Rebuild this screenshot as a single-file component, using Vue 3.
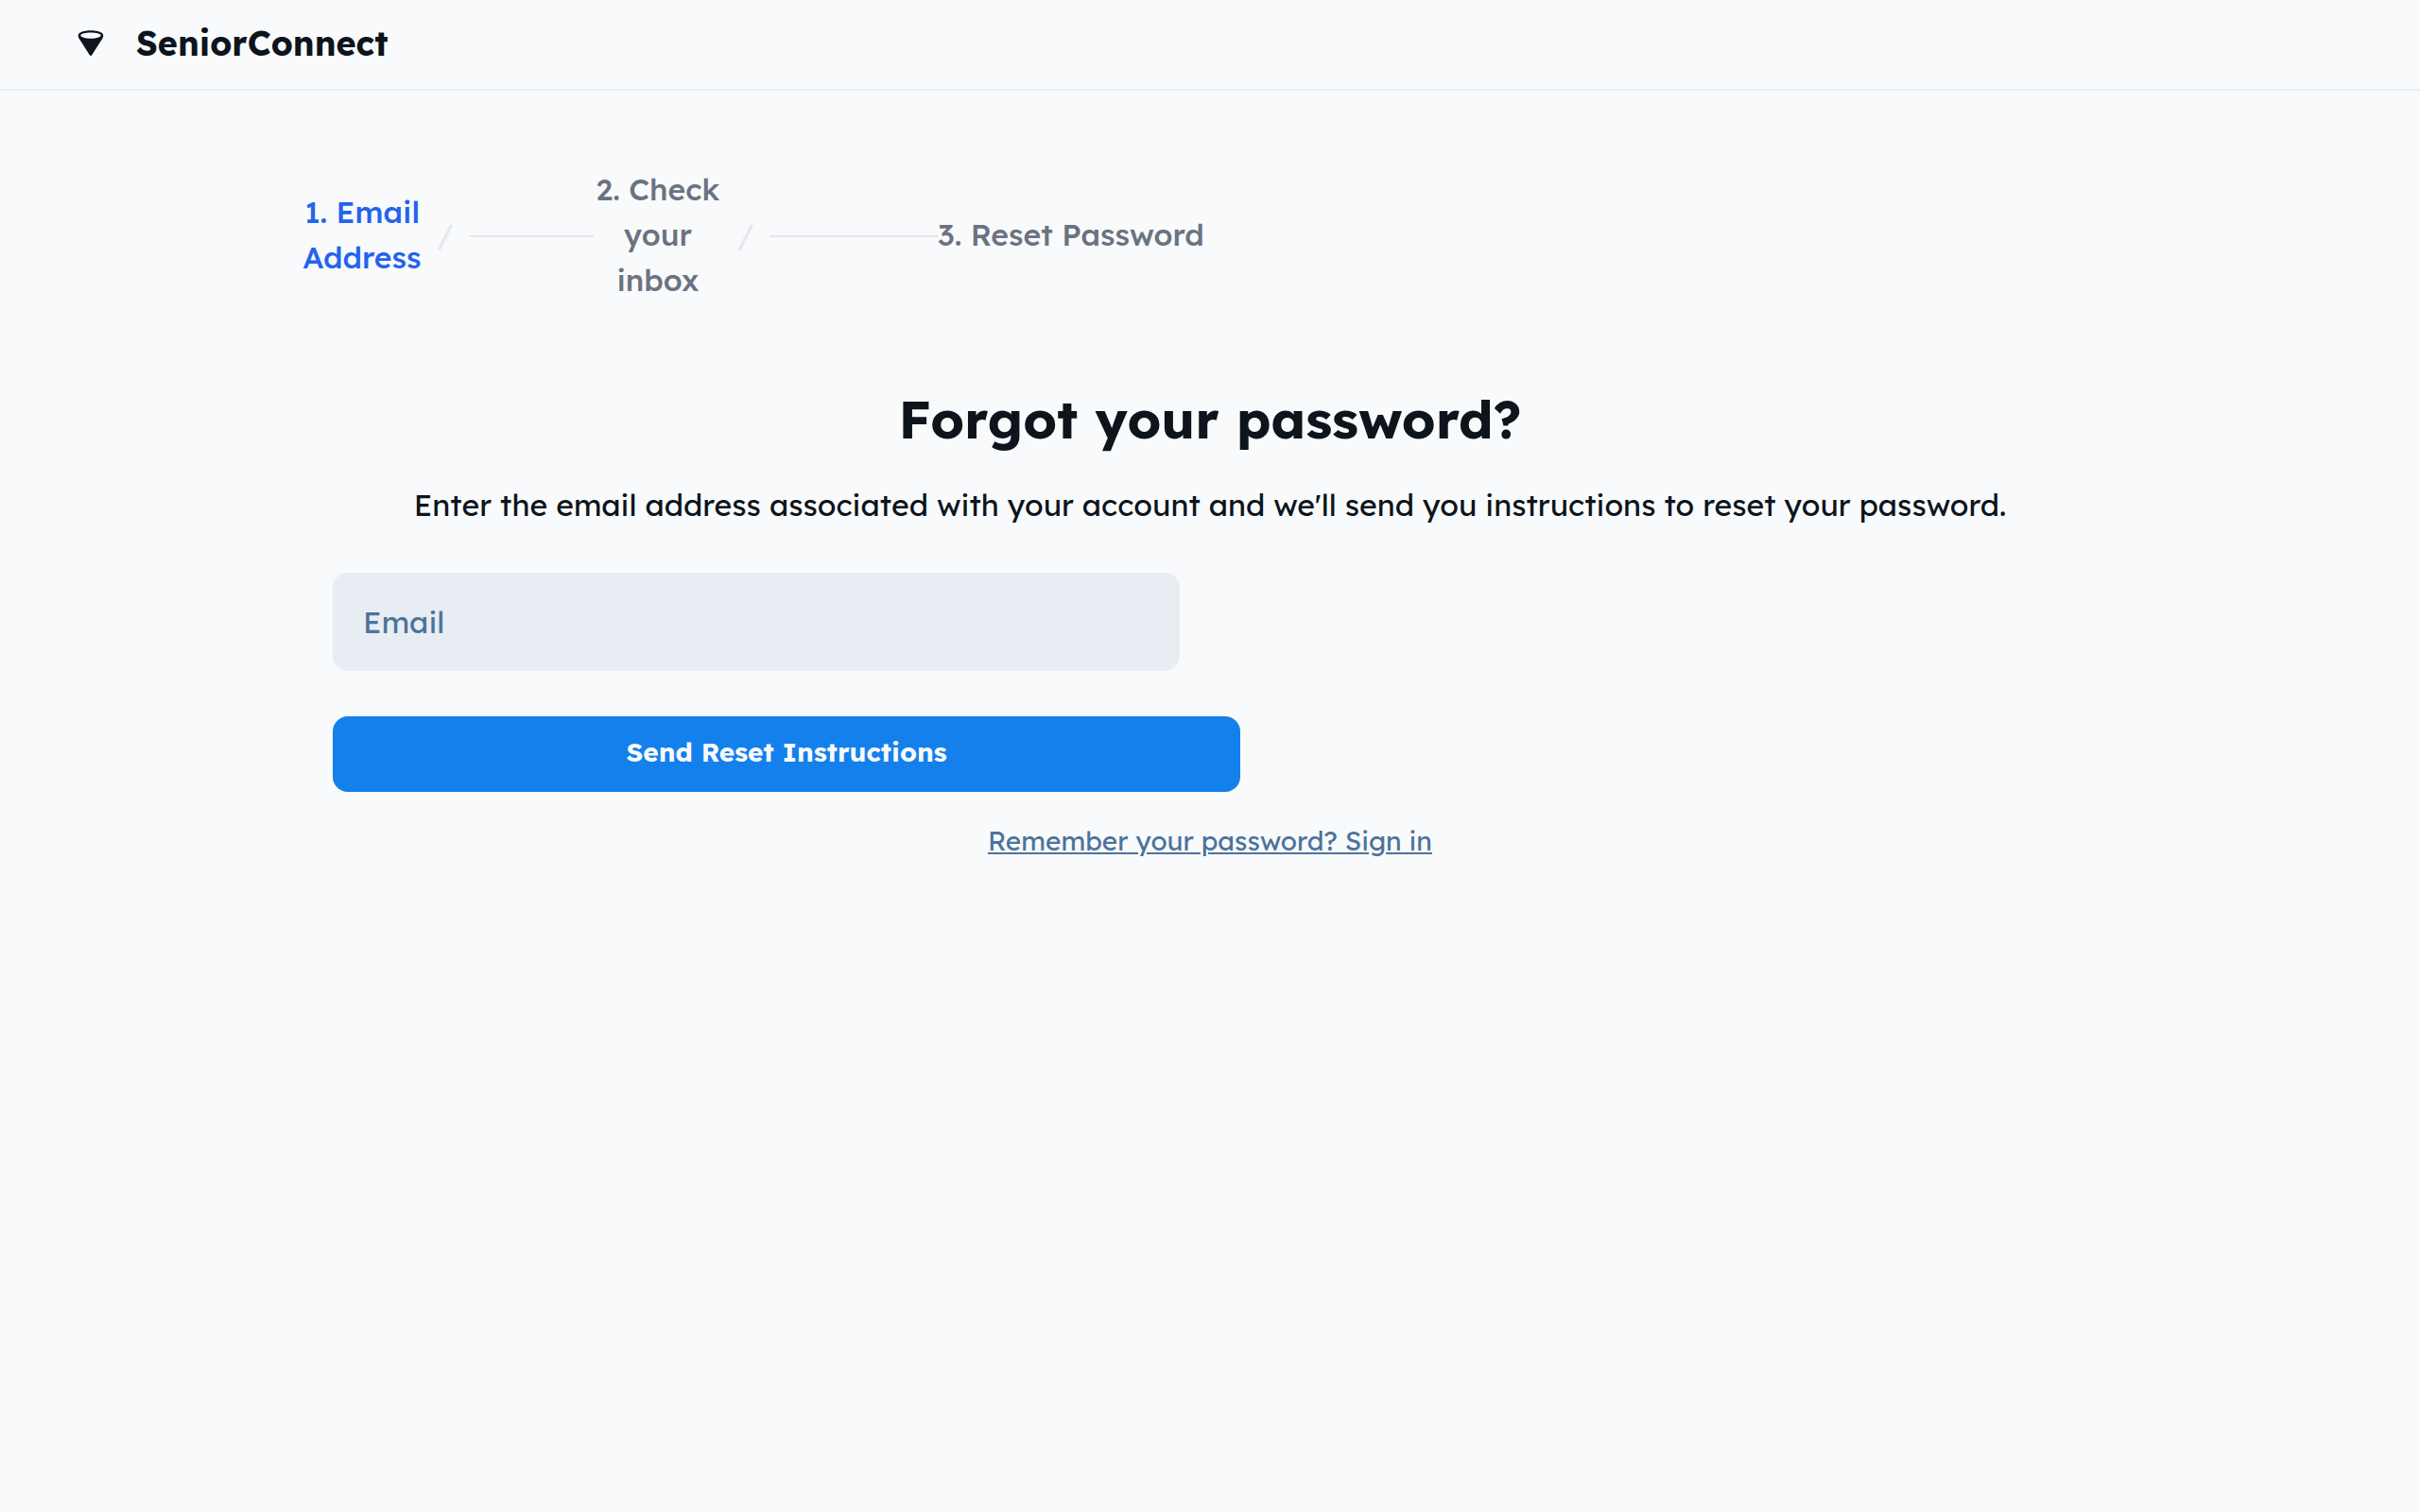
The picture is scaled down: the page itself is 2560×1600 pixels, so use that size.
<script setup>
import { ref } from 'vue'

const email = ref('')
const steps = [
  { label: '1. Email Address', size: 'first', active: true },
  { label: '2. Check your inbox', size: 'second', active: false },
  { label: '3. Reset Password', size: 'last', active: false },
]
</script>

<template>
  <div class="page">
    <header class="topbar">
      <svg class="logo" viewBox="0 0 32 32" aria-hidden="true">
        <path
          fill="currentColor"
          fill-rule="evenodd"
          d="M2.700 7.600C2.700 4.400 8.500 2.300 16 2.300S29.300 4.400 29.300 7.600C29.300 8.700 29 9.700 28.500 10.600L17.200 28.200C16.600 29.100 15.400 29.100 14.800 28.200L3.500 10.600C3 9.700 2.700 8.700 2.700 7.600ZM16 10.800C21.800 10.800 26.700 9.400 26.700 7.600S21.800 4.600 16 4.600S5.300 5.800 5.300 7.600S10.200 10.800 16 10.800Z"
        />
      </svg>
      <span class="brand">SeniorConnect</span>
    </header>

    <main class="content">
      <ol class="steps">
        <li
          v-for="(step, i) in steps"
          :key="step.label"
          class="step"
          :class="[step.size, { active: step.active }]"
        >
          <span class="label">{{ step.label }}</span>
          <template v-if="i < steps.length - 1">
            <span class="slash" aria-hidden="true">/</span>
            <span class="line"></span>
          </template>
        </li>
      </ol>

      <h1>Forgot your password?</h1>
      <p class="intro">
        Enter the email address associated with your account and we'll send you instructions to reset your password.
      </p>

      <form class="form" @submit.prevent>
        <input v-model="email" class="field" type="email" placeholder="Email" aria-label="Email" />
        <button class="submit" type="submit">Send Reset Instructions</button>
      </form>

      <p class="signin"><a href="#">Remember your password? Sign in</a></p>
    </main>
  </div>
</template>

<style>
body {
  margin: 0;
  background: #f8fafc;
}
</style>

<style scoped>
.page {
  min-height: 100vh;
  background: #f8fafc;
  color: #0d141b;
  font-family: Lexend, Inter, "Noto Sans", sans-serif;
  font-size: 32px;
  line-height: 48px;
}
.topbar {
  display: flex;
  align-items: center;
  gap: 32px;
  padding: 24px 80px 26px;
  border-bottom: 2px solid #e7edf3;
}
.logo {
  width: 32px;
  height: 32px;
}
.brand {
  font-size: 36px;
  font-weight: 700;
  line-height: 44px;
}
.content {
  max-width: 1920px;
  margin: 0 auto;
  padding: 80px 0;
}
.steps {
  display: flex;
  align-items: center;
  max-width: 960px;
  margin: 0;
  padding: 0;
  list-style: none;
  color: #6b7280;
  font-weight: 500;
  text-align: center;
}
.step {
  display: flex;
  align-items: center;
}
.first {
  width: 308px;
}
.second {
  width: 364px;
}
.first .label {
  width: 126px;
}
.second .label {
  width: 136px;
}
.last {
  white-space: nowrap;
}
.active .label {
  color: #2563eb;
}
.slash {
  margin: 0 16px;
  color: #e5e7eb;
  font-weight: 400;
}
.line {
  flex: 1;
  height: 4px;
  border-bottom: 2px solid #e5e7eb;
}
h1 {
  margin: 88px 0 0;
  font-size: 56px;
  font-weight: 700;
  line-height: 70px;
  text-align: center;
}
.intro {
  margin: 32px 0 0;
  text-align: center;
}
.form {
  display: flex;
  flex-direction: column;
  gap: 48px;
  margin: 48px 32px 0;
  max-width: 960px;
}
.field {
  box-sizing: border-box;
  width: calc(100% - 64px);
  height: 104px;
  padding: 0 32px;
  border: 0;
  border-radius: 16px;
  background: #e7edf3;
  color: #0d141b;
  font: inherit;
}
.field::placeholder {
  color: #4c739a;
  opacity: 1;
}
.submit {
  height: 80px;
  padding: 0 32px 4px;
  border: 0;
  border-radius: 16px;
  background: #1380ec;
  color: #f8fafc;
  font: inherit;
  font-size: 28px;
  font-weight: 700;
}
.signin {
  margin: 32px 0 0;
  font-size: 28px;
  line-height: 40px;
  text-align: center;
}
.signin a {
  color: #4c739a;
}
</style>
